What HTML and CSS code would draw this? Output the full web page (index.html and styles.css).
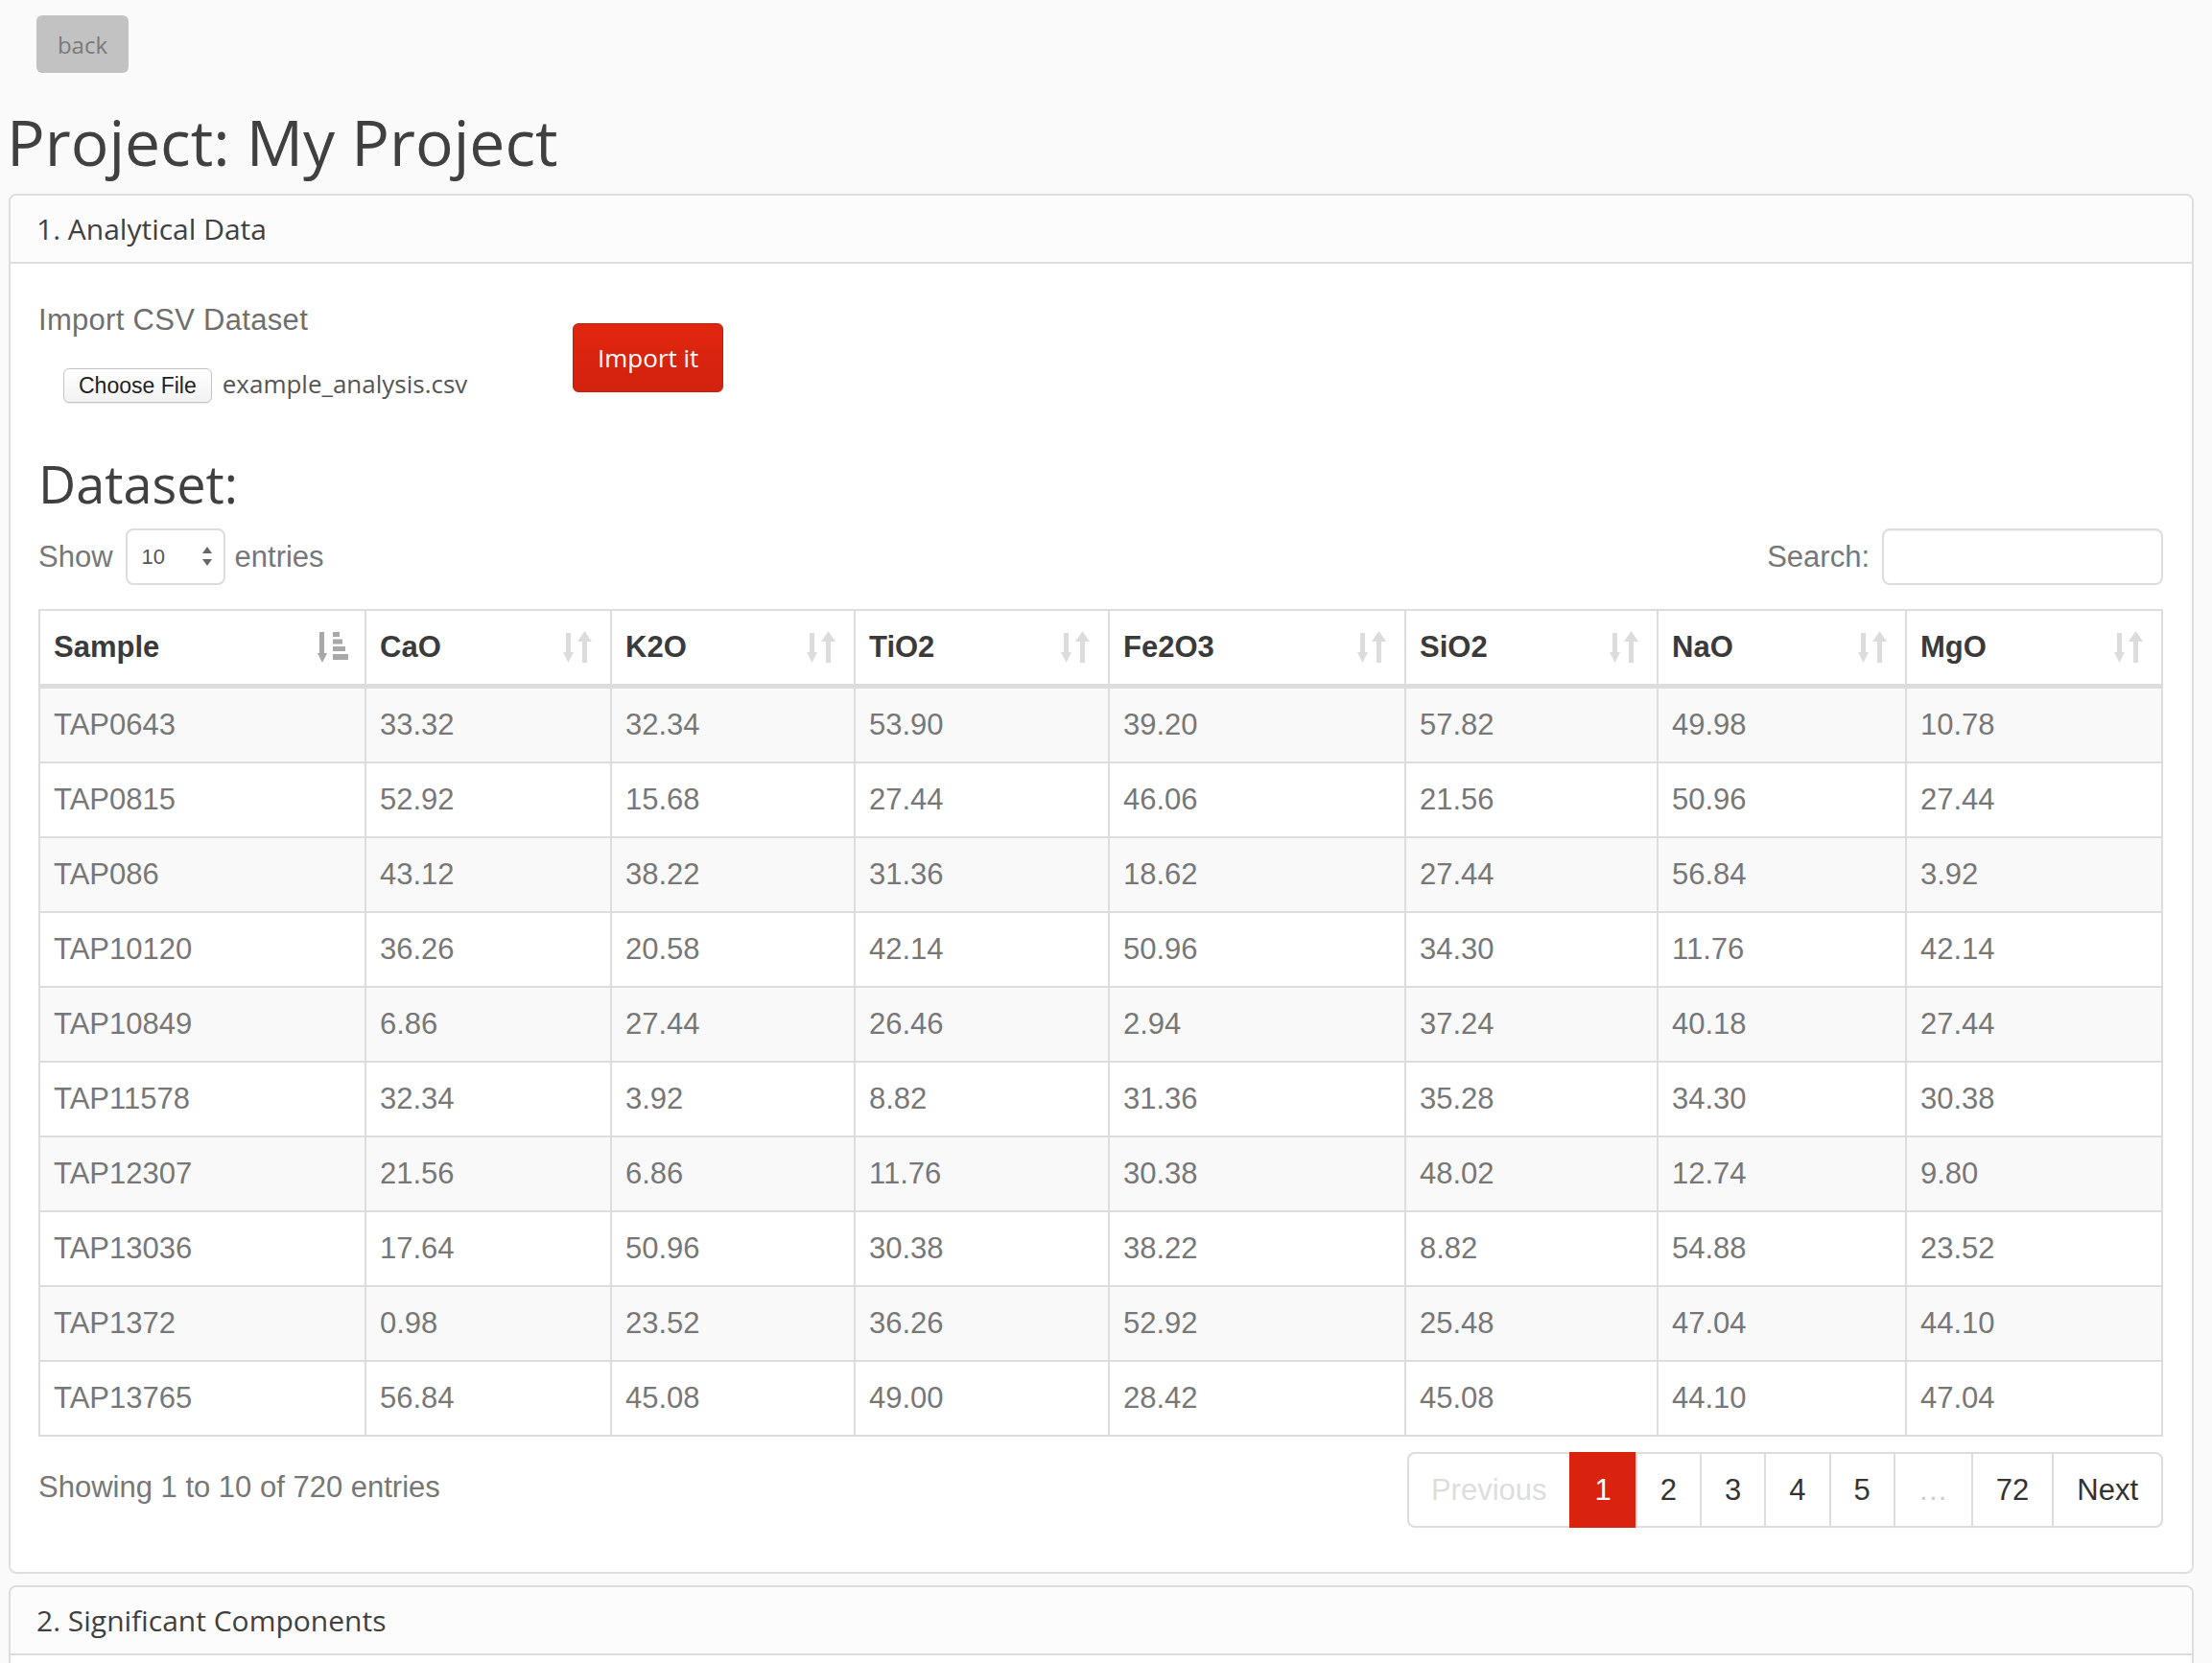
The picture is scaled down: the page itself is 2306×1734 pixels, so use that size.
FILE: index.html
```html
<!DOCTYPE html>
<html lang="en">
<head>
<meta charset="utf-8">
<title>Project: My Project</title>
<link rel="stylesheet" href="styles.css">
</head>
<body>
<div class="page">
  <button class="btn-back">back</button>
  <h1 class="title">Project: My Project</h1>

  <section class="panel">
    <div class="panel-heading">1. Analytical Data</div>
    <div class="panel-body">
      <div class="import-row">
        <div class="import-form">
          <div class="form-label">Import CSV Dataset</div>
          <div class="file-input">
            <span class="file-btn">Choose File</span>
            <span class="file-name">example_analysis.csv</span>
          </div>
        </div>
        <button class="btn-import">Import it</button>
      </div>

      <h2 class="dataset-title">Dataset:</h2>

      <div class="dt-top">
        <div class="dt-length">
          <span>Show</span>
          <span class="select"><span>10</span>
            <svg class="select-arrows" viewBox="0 0 10 21" width="10" height="21"><polygon points="0,7 10,7 5,0" fill="#666"/><polygon points="0,13 10,13 5,20" fill="#666"/></svg>
          </span>
          <span>entries</span>
        </div>
        <div class="dt-filter">
          <span>Search:</span>
          <span class="search-input"></span>
        </div>
      </div>

      <table class="dt">
        <thead>
          <tr>
            <th class="w-sample"><div class="th-inner"><span>Sample</span>
              <svg class="sort-icon sorted" viewBox="0 0 32 34" width="32" height="34"><rect x="2" y="1" width="5" height="23"/><polygon points="0,23 10,23 5,33"/><rect x="16" y="1" width="7" height="5"/><rect x="16" y="8.5" width="10" height="5"/><rect x="16" y="16" width="13" height="5"/><rect x="16" y="24" width="16" height="6"/></svg></div></th>
            <th class="w-cao"><div class="th-inner"><span>CaO</span>
              <svg class="sort-icon" viewBox="0 0 32 34" width="32" height="34"><rect x="3" y="2" width="5" height="21"/><polygon points="0,22 11,22 5.5,33"/><polygon points="15,11 30,11 22.5,0"/><rect x="20" y="10" width="5" height="23"/></svg></div></th>
            <th class="w-k2o"><div class="th-inner"><span>K2O</span>
              <svg class="sort-icon" viewBox="0 0 32 34" width="32" height="34"><rect x="3" y="2" width="5" height="21"/><polygon points="0,22 11,22 5.5,33"/><polygon points="15,11 30,11 22.5,0"/><rect x="20" y="10" width="5" height="23"/></svg></div></th>
            <th class="w-tio2"><div class="th-inner"><span>TiO2</span>
              <svg class="sort-icon" viewBox="0 0 32 34" width="32" height="34"><rect x="3" y="2" width="5" height="21"/><polygon points="0,22 11,22 5.5,33"/><polygon points="15,11 30,11 22.5,0"/><rect x="20" y="10" width="5" height="23"/></svg></div></th>
            <th class="w-fe2o3"><div class="th-inner"><span>Fe2O3</span>
              <svg class="sort-icon" viewBox="0 0 32 34" width="32" height="34"><rect x="3" y="2" width="5" height="21"/><polygon points="0,22 11,22 5.5,33"/><polygon points="15,11 30,11 22.5,0"/><rect x="20" y="10" width="5" height="23"/></svg></div></th>
            <th class="w-sio2"><div class="th-inner"><span>SiO2</span>
              <svg class="sort-icon" viewBox="0 0 32 34" width="32" height="34"><rect x="3" y="2" width="5" height="21"/><polygon points="0,22 11,22 5.5,33"/><polygon points="15,11 30,11 22.5,0"/><rect x="20" y="10" width="5" height="23"/></svg></div></th>
            <th class="w-nao"><div class="th-inner"><span>NaO</span>
              <svg class="sort-icon" viewBox="0 0 32 34" width="32" height="34"><rect x="3" y="2" width="5" height="21"/><polygon points="0,22 11,22 5.5,33"/><polygon points="15,11 30,11 22.5,0"/><rect x="20" y="10" width="5" height="23"/></svg></div></th>
            <th class="w-mgo"><div class="th-inner"><span>MgO</span>
              <svg class="sort-icon" viewBox="0 0 32 34" width="32" height="34"><rect x="3" y="2" width="5" height="21"/><polygon points="0,22 11,22 5.5,33"/><polygon points="15,11 30,11 22.5,0"/><rect x="20" y="10" width="5" height="23"/></svg></div></th>
          </tr>
        </thead>
        <tbody>
          <tr><td>TAP0643</td><td>33.32</td><td>32.34</td><td>53.90</td><td>39.20</td><td>57.82</td><td>49.98</td><td>10.78</td></tr>
          <tr><td>TAP0815</td><td>52.92</td><td>15.68</td><td>27.44</td><td>46.06</td><td>21.56</td><td>50.96</td><td>27.44</td></tr>
          <tr><td>TAP086</td><td>43.12</td><td>38.22</td><td>31.36</td><td>18.62</td><td>27.44</td><td>56.84</td><td>3.92</td></tr>
          <tr><td>TAP10120</td><td>36.26</td><td>20.58</td><td>42.14</td><td>50.96</td><td>34.30</td><td>11.76</td><td>42.14</td></tr>
          <tr><td>TAP10849</td><td>6.86</td><td>27.44</td><td>26.46</td><td>2.94</td><td>37.24</td><td>40.18</td><td>27.44</td></tr>
          <tr><td>TAP11578</td><td>32.34</td><td>3.92</td><td>8.82</td><td>31.36</td><td>35.28</td><td>34.30</td><td>30.38</td></tr>
          <tr><td>TAP12307</td><td>21.56</td><td>6.86</td><td>11.76</td><td>30.38</td><td>48.02</td><td>12.74</td><td>9.80</td></tr>
          <tr><td>TAP13036</td><td>17.64</td><td>50.96</td><td>30.38</td><td>38.22</td><td>8.82</td><td>54.88</td><td>23.52</td></tr>
          <tr><td>TAP1372</td><td>0.98</td><td>23.52</td><td>36.26</td><td>52.92</td><td>25.48</td><td>47.04</td><td>44.10</td></tr>
          <tr><td>TAP13765</td><td>56.84</td><td>45.08</td><td>49.00</td><td>28.42</td><td>45.08</td><td>44.10</td><td>47.04</td></tr>
        </tbody>
      </table>

      <div class="dt-bottom">
        <div class="dt-info">Showing 1 to 10 of 720 entries</div>
        <div class="pagination">
          <span class="page-item prev disabled">Previous</span>
          <span class="page-item active">1</span>
          <span class="page-item">2</span>
          <span class="page-item">3</span>
          <span class="page-item">4</span>
          <span class="page-item">5</span>
          <span class="page-item ellipsis">…</span>
          <span class="page-item">72</span>
          <span class="page-item">Next</span>
        </div>
      </div>
    </div>
  </section>

  <section class="panel panel-second">
    <div class="panel-heading">2. Significant Components</div>
    <div class="panel-body panel-body-empty"></div>
  </section>
</div>
</body>
</html>
```

FILE: styles.css
```css
* {
  box-sizing: border-box;
}

html,
body {
  margin: 0;
}

body {
  background: #fafafa;
  color: #777;
  font-family: "Liberation Sans", Arial, sans-serif;
  font-size: 31px;
  line-height: 44px;
}

.page {
  padding: 16px 19px 0 9px;
}

.btn-back {
  display: flex;
  align-items: center;
  justify-content: center;
  width: 96px;
  height: 60px;
  margin-left: 29px;
  padding: 0;
  background: #c2c2c2;
  border: 0;
  border-radius: 6px;
  color: #7a7a7a;
  font-family: "Open Sans", sans-serif;
  font-size: 24px;
}

.title {
  margin: 35px 0 19px -2px;
  font-family: "Open Sans", sans-serif;
  font-weight: 400;
  font-size: 66px;
  line-height: 72px;
  color: #404040;
}

.panel {
  background: #fff;
  border: 2px solid #ddd;
  border-radius: 8px;
  overflow: hidden;
}

.panel-second {
  margin-top: 12px;
}

.panel-heading {
  height: 71px;
  padding: 0 27px;
  border-bottom: 2px solid #ddd;
  background: #fcfcfc;
  font-family: "Open Sans", sans-serif;
  font-size: 30px;
  line-height: 70px;
  color: #404040;
}

.panel-body {
  padding: 37px 30px 46px 29px;
}

.panel-body-empty {
  min-height: 200px;
}

/* import form */
.import-row {
  display: flex;
  align-items: flex-start;
}

.import-form {
  width: 557px;
}

.form-label {
  color: #6f6f6f;
  letter-spacing: 0.3px;
}

.file-input {
  display: flex;
  align-items: baseline;
  margin: 28px 0 0 26px;
}

.file-btn {
  display: inline-block;
  height: 36px;
  padding: 0 15px;
  border: 1px solid #c4c4c4;
  border-radius: 6px;
  background: linear-gradient(#ffffff, #f2f2f2);
  box-shadow: 0 1px 1px rgba(0, 0, 0, 0.08);
  color: #222;
  font-size: 23px;
  line-height: 34px;
}

.file-name {
  margin-left: 11px;
  font-family: "Open Sans", sans-serif;
  font-size: 26px;
  line-height: 30px;
  color: #555;
}

.btn-import {
  margin-top: 25px;
  height: 72px;
  padding: 0 25px;
  border: 1px solid #c21f0d;
  border-radius: 6px;
  background: linear-gradient(#e1260f, #d2220e);
  color: #fff;
  font-family: "Open Sans", sans-serif;
  font-size: 26px;
}

.dataset-title {
  margin: 55px 0 17px;
  font-family: "Open Sans", sans-serif;
  font-weight: 400;
  font-size: 54px;
  line-height: 59px;
  color: #404040;
}

/* datatable controls */
.dt-top {
  display: flex;
  justify-content: space-between;
  align-items: center;
  height: 59px;
}

.dt-length,
.dt-filter {
  display: flex;
  align-items: center;
}

.select {
  display: flex;
  align-items: center;
  justify-content: space-between;
  width: 104px;
  height: 59px;
  margin: 0 10px 0 13px;
  padding: 0 12px 0 15px;
  border: 2px solid #ddd;
  border-radius: 8px;
  background: #fff;
  color: #555;
  font-size: 22px;
}

.select-arrows {
  display: block;
}

.search-input {
  display: block;
  width: 293px;
  height: 59px;
  margin-left: 13px;
  border: 2px solid #ddd;
  border-radius: 8px;
  background: #fff;
  box-shadow: inset 0 1px 1px rgba(0, 0, 0, 0.05);
}

/* table */
.dt {
  margin-top: 25px;
  width: 2215px;
  table-layout: fixed;
  border-collapse: separate;
  border-spacing: 0;
  border-top: 2px solid #ddd;
  border-left: 2px solid #ddd;
}

.dt th,
.dt td {
  padding: 0 14px;
  border-right: 2px solid #ddd;
  border-bottom: 2px solid #ddd;
  text-align: left;
  white-space: nowrap;
  line-height: 76px;
}

.dt th {
  padding-right: 17px;
  border-bottom-width: 5px;
  background: #fff;
  color: #3a3a3a;
  font-weight: 700;
}

.dt td {
  color: #777;
}

.dt tbody tr:nth-child(odd) td {
  background: #f9f9f9;
}

.dt tbody tr:nth-child(even) td {
  background: #fff;
}

.th-inner {
  display: flex;
  justify-content: space-between;
  align-items: center;
  height: 76px;
}

.sort-icon {
  display: block;
  fill: #dcdcdc;
}

.sort-icon.sorted {
  fill: #a8a8a8;
}

.w-sample { width: 340px; }
.w-cao { width: 256px; }
.w-k2o { width: 254px; }
.w-tio2 { width: 265px; }
.w-fe2o3 { width: 309px; }
.w-sio2 { width: 263px; }
.w-nao { width: 259px; }
.w-mgo { width: 267px; }

/* bottom */
.dt-bottom {
  display: flex;
  justify-content: space-between;
  align-items: flex-start;
}

.dt-info {
  margin-top: 31px;
}

.pagination {
  display: flex;
  margin-top: 16px;
}

.page-item {
  display: block;
  height: 79px;
  padding: 0 24px;
  border: 2px solid #ddd;
  border-right: 0;
  background: #fff;
  color: #333;
  line-height: 75px;
}

.page-item:first-child {
  border-radius: 8px 0 0 8px;
}

.page-item:last-child {
  border-right: 2px solid #ddd;
  border-radius: 0 8px 8px 0;
}

.page-item.prev {
  padding: 0 23px;
}

.page-item.active {
  padding: 0 25px;
}

.page-item.disabled {
  color: #ddd;
}

.page-item.ellipsis {
  color: #ccc;
}

.page-item.active {
  background: #d9230f;
  border-color: #d9230f;
  color: #fff;
}
```
